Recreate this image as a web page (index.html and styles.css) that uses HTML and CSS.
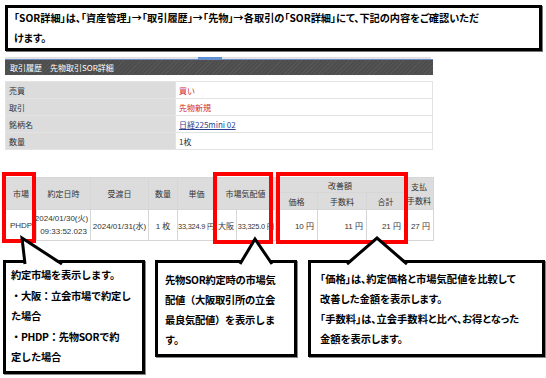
FILE: index.html
```html
<!DOCTYPE html>
<html lang="ja">
<head>
<meta charset="utf-8">
<link rel="stylesheet" href="styles.css">
</head>
<body>
<div class="page">
  <div class="intro"><span class="line">「SOR詳細」は、「資産管理」→「取引履歴」→「先物」→各取引の「SOR詳細」にて、下記の内容をご確認いただ</span><br>けます。</div>

  <div class="rule"><span class="rule-mark"></span></div>
  <div class="titlebar">取引履歴　先物取引SOR詳細</div>

  <table class="info">
    <tr><th>売買</th><td class="red">買い</td></tr>
    <tr><th>取引</th><td class="red">先物新規</td></tr>
    <tr><th>銘柄名</th><td><a class="link">日経225mini 02</a></td></tr>
    <tr><th>数量</th><td>1枚</td></tr>
  </table>

  <div class="sor-wrap">
    <table class="sor">
      <colgroup>
        <col class="c31"><col class="c54"><col class="c58"><col class="c29"><col class="c38">
        <col class="c21"><col class="c39"><col class="c42"><col class="c49"><col class="c38"><col class="c29">
      </colgroup>
      <tr class="h1">
        <th rowspan="2">市場</th>
        <th rowspan="2">約定日時</th>
        <th rowspan="2">受渡日</th>
        <th rowspan="2">数量</th>
        <th rowspan="2">単価</th>
        <th rowspan="2" colspan="2">市場気配値</th>
        <th colspan="3">改善額</th>
        <th rowspan="2" class="two">支払<br>手数料</th>
      </tr>
      <tr class="h2">
        <th>価格</th><th>手数料</th><th>合計</th>
      </tr>
      <tr class="data">
        <td class="ctr">PHDP</td>
        <td class="ctr dt"><span class="nowrap">2024/01/30(火)</span><br>09:33:52.023</td>
        <td class="ctr nowrap">2024/01/31(水)</td>
        <td class="ctr">1 枚</td>
        <td class="rgt nowrap tight">33,324.9 円</td>
        <td class="ctr">大阪</td>
        <td class="rgt nowrap tight">33,325.0 円</td>
        <td class="rgt">10 円</td>
        <td class="rgt">11 円</td>
        <td class="rgt">21 円</td>
        <td class="rgt">27 円</td>
      </tr>
    </table>
    <div class="mark mark-market"></div>
    <div class="mark mark-quote"></div>
    <div class="mark mark-improve"></div>
  </div>

  <div class="notes">
    <div class="note note1">
      <svg class="tail" width="80" height="29" viewBox="0 0 80 29"><polygon points="22,30 19,2 59,30" fill="#fff"/><polyline points="22,28 19,2 59,28" fill="none" stroke="#000" stroke-width="3"/></svg>
      約定市場を表示します。<br>・大阪：立会市場で約定し<br>た場合<br>・PHDP：先物SORで約<br>定した場合
    </div>
    <div class="note note2">
      <svg class="tail" width="130" height="29" viewBox="0 0 130 29"><polygon points="85,30 100,3 117,30" fill="#fff"/><polyline points="85,28 100,3 117,28" fill="none" stroke="#000" stroke-width="3"/></svg>
      先物SOR約定時の市場気<br>配値（大阪取引所の立会<br>最良気配値）を表示しま<br>す。
    </div>
    <div class="note note3">
      <svg class="tail" width="110" height="29" viewBox="0 0 110 29"><polygon points="39,30 69,2 99,30" fill="#fff"/><polyline points="39,28 69,2 99,28" fill="none" stroke="#000" stroke-width="3"/></svg>
      「価格」は、約定価格と市場気配値を比較して<br>改善した金額を表示します。<br>「手数料」は、立会手数料と比べ、お得となった<br>金額を表示します。
    </div>
  </div>
</div>
</body>
</html>
```

FILE: styles.css
```css
* { box-sizing: border-box; }
html, body { margin: 0; padding: 0; background: #fff; }
body { width: 546px; height: 378px; overflow: hidden; font-family: "Liberation Sans", "Noto Sans CJK JP", sans-serif; }

.page { padding-top: 5px; }

.intro {
  margin-left: 5px;
  width: 537px;
  height: 46px;
  border: 3px solid #000;
  padding: 0 6px;
  font-family: "Noto Sans CJK JP", sans-serif;
  font-weight: bold;
  font-size: 10.2px;
  line-height: 20px;
  color: #000;
  font-feature-settings: "palt";
  box-shadow: 1px 1px 0 #777;
  white-space: nowrap;
}

.rule {
  margin: 6px 0 0 5px;
  width: 426px;
  height: 2px;
  background: #e2e2e2;
  display: flex;
}
.rule-mark { margin-left: 193px; width: 24px; height: 2px; background: #5b8fd6; }

.titlebar {
  margin-left: 5px;
  width: 428px;
  height: 16px;
  border-top: 1px solid #6b8fc4;
  background: #4d4d4d repeating-linear-gradient(135deg, rgba(255,255,255,0.05) 0 1px, transparent 1px 3px);
  color: #fff;
  font-family: "Noto Sans CJK JP", sans-serif;
  font-size: 8px;
  line-height: 15px;
  padding-left: 5px;
}

.info {
  margin: 6px 0 0 5px;
  width: 428px;
  border-collapse: collapse;
  font-family: "Noto Sans CJK JP", sans-serif;
  font-size: 8px;
  color: #333;
}
.info th, .info td {
  height: 17px;
  padding: 0 3px;
  border: 1px solid #e3e3e3;
  text-align: left;
  font-weight: normal;
}
.info th { width: 170px; background: #dcdcdc; }
.info td { background: #fff; }
.info .red { color: #d0262b; }
.info .link { color: #2b3f8f; text-decoration: underline; }

.sor-wrap { position: relative; margin: 27px 0 0 5px; width: 428px; }
.sor {
  width: 428px;
  table-layout: fixed;
  border-collapse: collapse;
  font-family: "Liberation Sans", "Noto Sans CJK JP", sans-serif;
  font-size: 8px;
  color: #333;
}
.c31 { width: 31px; } .c54 { width: 54px; } .c58 { width: 58px; } .c29 { width: 29px; }
.c38 { width: 38px; } .c21 { width: 21px; } .c39 { width: 39px; } .c42 { width: 42px; }
.c49 { width: 49px; }
.sor th, .sor td { border: 1px solid #d6d6d6; padding: 0; }
.sor th { background: #dcdcdc; font-weight: normal; text-align: center; font-family: "Noto Sans CJK JP", sans-serif; }
.sor .h1 { height: 15px; }
.sor .h2 { height: 17px; }
.sor .two { line-height: 14px; }
.sor .data { height: 31px; }
.sor td { background: #fff; overflow: visible; }
.sor .ctr { text-align: center; }
.sor .rgt { text-align: right; padding-right: 3px; }
.sor .tight { font-size: 7.4px; letter-spacing: -0.2px; padding-right: 1px; }
.sor .dt { line-height: 13px; }
.nowrap { white-space: nowrap; }
.sor .dt .nowrap { display: inline-block; margin-left: -4px; }

.mark { position: absolute; border: 4px solid #ff0000; top: -5px; }
.mark-market { left: -3px; width: 34px; height: 71px; }
.mark-quote { left: 208px; width: 60px; height: 72px; }
.mark-improve { left: 271px; width: 132px; height: 72px; }

.notes { display: flex; align-items: flex-start; margin-top: 19px; padding-left: 3px; }
.note {
  position: relative;
  border: 3px solid #000;
  background: #fff;
  font-family: "Noto Sans CJK JP", sans-serif;
  font-weight: bold;
  font-size: 10.3px;
  color: #000;
  white-space: nowrap;
  box-shadow: 1px 1px 0 #888;
}
.tail { position: absolute; left: -3px; top: -27px; overflow: visible; }
.note1 { width: 142px; height: 114px; padding: 2px 0 0 5px; line-height: 20.5px; letter-spacing: -0.3px; }
.note2 { width: 142px; height: 97px; margin-left: 10px; padding: 7px 0 0 7px; line-height: 20px; letter-spacing: -0.3px; }
.note3 { width: 237px; height: 97px; margin-left: 11px; padding: 6px 0 0 9px; line-height: 20px; font-feature-settings: "palt"; }
```
